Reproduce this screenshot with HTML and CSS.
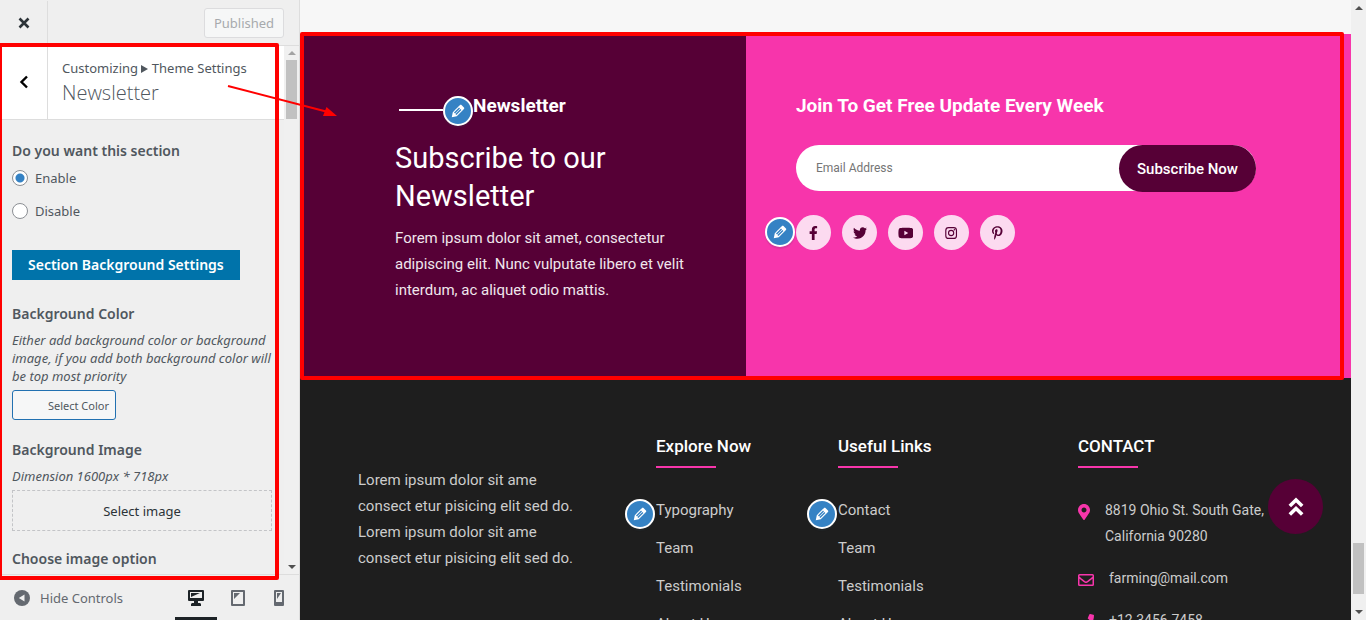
FILE: index.html
```html
<!DOCTYPE html>
<html lang="en">
<head>
<meta charset="utf-8">
<title>Customize: Newsletter</title>
<link rel="stylesheet" href="styles.css">
</head>
<body>
<svg class="defs" aria-hidden="true">
  <symbol id="pencil" viewBox="0 0 20 20"><path d="M13.89 3.39l2.71 2.72c.46.46.42 1.24.03 1.64l-8.01 8.02-5.56 1.16 1.16-5.58s7.6-7.63 7.99-8.03c.39-.39 1.22-.39 1.68.07zm-2.73 2.79l-5.59 5.61 1.11 1.11 5.54-5.65zm-2.97 8.23l5.58-5.6-1.07-1.08-5.59 5.6z"/></symbol>
</svg>
<div class="app">
  <aside class="sidebar">
    <header class="topbar">
      <button class="close" aria-label="Close"><svg width="12" height="12" viewBox="0 0 12 12"><path d="M1.500 1.500l9 9M10.500 1.500l-9 9" stroke="currentColor" stroke-width="2.600"/></svg></button>
      <button class="published" disabled>Published</button>
    </header>
    <div class="panel">
      <div class="controls">
        <div class="heading">
          <button class="back" aria-label="Back"><svg width="10" height="14" viewBox="0 0 10 14"><path d="M8 1.500L2.500 7l5.500 5.500" fill="none" stroke="currentColor" stroke-width="2.400"/></svg></button>
          <div class="crumbs"><span>Customizing <i class="tri"></i> Theme Settings</span><h1>Newsletter</h1></div>
        </div>
        <div class="fields">
          <fieldset class="choice">
            <legend>Do you want this section</legend>
            <label><input type="radio" name="show" checked>Enable</label>
            <label><input type="radio" name="show">Disable</label>
          </fieldset>
          <h2 class="banner">Section Background Settings</h2>
          <h3>Background Color</h3>
          <p class="note">Either add background color or background<br>image, if you add both background color will<br>be top most priority</p>
          <button class="color">Select Color</button>
          <h3>Background Image</h3>
          <p class="note">Dimension 1600px * 718px</p>
          <button class="drop">Select image</button>
          <h3>Choose image option</h3>
        </div>
      </div>
      <div class="scroll scroll-side"><i class="up dim"></i><b class="thumb"></b><i class="down"></i></div>
      <div class="frame"></div>
    </div>
    <footer class="bottombar">
      <button class="hide"><svg width="16" height="16" viewBox="0 0 16 16"><circle cx="8" cy="8" r="8" fill="currentColor"/><path d="M10.500 4.500v7L4.800 8z" fill="#eee"/></svg>Hide Controls</button>
      <div class="devices">
        <button class="on" aria-label="Desktop"><svg width="16" height="16" viewBox="0 0 16 16"><path fill="currentColor" fill-rule="evenodd" d="M1 0h14a1 1 0 0 1 1 1v9a1 1 0 0 1-1 1h-5v2h2a2 2 0 0 1 1 1v2H3v-2l1-1h2v-2H1a1 1 0 0 1-1-1V1a1 1 0 0 1 1-1zm1 2v6h12V2zm1 1h9L3 7z"/></svg></button>
        <button aria-label="Tablet"><svg width="14" height="16" viewBox="0 0 14 16"><path fill="currentColor" fill-rule="evenodd" d="M1 0h12a1 1 0 0 1 1 1v14a1 1 0 0 1-1 1H1a1 1 0 0 1-1-1V1a1 1 0 0 1 1-1zm1 2v12h10V2zm1 1h6L3 9z"/></svg></button>
        <button aria-label="Mobile"><svg width="10" height="16" viewBox="0 0 10 16"><path fill="currentColor" fill-rule="evenodd" d="M1 0h8a1 1 0 0 1 1 1v14a1 1 0 0 1-1 1H1a1 1 0 0 1-1-1V1a1 1 0 0 1 1-1zm1 2v10h6V2zm1 1h4L3 9z"/></svg></button>
      </div>
    </footer>
  </aside>
  <main class="preview">
    <section class="newsletter">
      <div class="intro">
        <h2 class="eyebrow"><span class="rule"></span><button class="edit" aria-label="Edit title"><svg><use href="#pencil"/></svg></button><span class="word">Newsletter</span></h2>
        <p class="lead">Subscribe to our<br>Newsletter</p>
        <p class="copy">Forem ipsum dolor sit amet, consectetur<br>adipiscing elit. Nunc vulputate libero et velit<br>interdum, ac aliquet odio mattis.</p>
      </div>
      <div class="join">
        <h2>Join To Get Free Update Every Week</h2>
        <form class="signup"><input type="email" placeholder="Email Address" aria-label="Email Address"><button type="button">Subscribe Now</button></form>
        <div class="social">
          <button class="edit edit-over" aria-label="Edit social links"><svg><use href="#pencil"/></svg></button>
          <a href="#" aria-label="Facebook"><svg viewBox="0 0 320 512"><path d="M279.140 288l14.220-92.660h-88.910v-60.130c0-25.350 12.420-50.060 52.240-50.060h40.420V6.260S260.430 0 225.360 0c-73.220 0-121.080 44.380-121.080 124.720v70.620H22.890V288h81.390v224h100.170V288z"/></svg></a>
          <a href="#" aria-label="Twitter"><svg viewBox="0 0 512 512"><path d="M459.370 151.716c.325 4.548.325 9.097.325 13.645 0 138.720-105.583 298.558-298.558 298.558-59.452 0-114.680-17.219-161.137-47.106 8.447.974 16.568 1.299 25.340 1.299 49.055 0 94.213-16.568 130.274-44.832-46.132-.975-84.792-31.188-98.112-72.772 6.498.974 12.995 1.624 19.818 1.624 9.421 0 18.843-1.300 27.614-3.573-48.081-9.747-84.143-51.980-84.143-102.985v-1.299c13.969 7.797 30.214 12.670 47.431 13.319-28.264-18.843-46.781-51.005-46.781-87.391 0-19.492 5.197-37.360 14.294-52.954 51.655 63.675 129.300 105.258 216.365 109.807-1.624-7.797-2.599-15.918-2.599-24.040 0-57.828 46.782-104.934 104.934-104.934 30.213 0 57.502 12.670 76.670 33.137 23.715-4.548 46.456-13.320 66.599-25.340-7.798 24.366-24.366 44.833-46.132 57.827 21.117-2.273 41.584-8.122 60.426-16.243-14.292 20.791-32.161 39.308-52.628 54.253z"/></svg></a>
          <a href="#" aria-label="YouTube"><svg viewBox="0 0 576 512"><path d="M549.655 124.083c-6.281-23.650-24.787-42.276-48.284-48.597C458.781 64 288 64 288 64S117.220 64 74.629 75.486c-23.497 6.322-42.003 24.947-48.284 48.597-11.412 42.867-11.412 132.305-11.412 132.305s0 89.438 11.412 132.305c6.281 23.650 24.787 41.500 48.284 47.821C117.220 448 288 448 288 448s170.780 0 213.371-11.486c23.497-6.321 42.003-24.171 48.284-47.821 11.412-42.867 11.412-132.305 11.412-132.305s0-89.438-11.412-132.305zM232.145 337.591V175.185l142.739 81.205z"/></svg></a>
          <a href="#" aria-label="Instagram"><svg viewBox="0 0 448 512"><path fill-rule="evenodd" d="M132 36h184a124 124 0 0 1 124 124v192a124 124 0 0 1-124 124H132A124 124 0 0 1 8 352V160A124 124 0 0 1 132 36zm0 42a82 82 0 0 0-82 82v192a82 82 0 0 0 82 82h184a82 82 0 0 0 82-82V160a82 82 0 0 0-82-82zm92 63a115 115 0 1 1 0 230 115 115 0 0 1 0-230zm0 40a75 75 0 1 0 0 150 75 75 0 0 0 0-150zM344 110a27 27 0 1 1 0 54 27 27 0 0 1 0-54z"/></svg></a>
          <a href="#" aria-label="Pinterest"><svg viewBox="0 0 384 512"><path d="M204 6.500C101.400 6.500 0 74.900 0 185.600 0 256 39.600 296 63.600 296c9.900 0 15.600-27.600 15.600-35.400 0-9.300-23.700-29.100-23.700-67.800 0-80.400 61.200-137.400 140.400-137.400 68.100 0 118.500 38.700 118.500 109.800 0 53.100-21.300 152.700-90.300 152.700-24.900 0-46.200-18-46.200-43.800 0-37.800 26.400-74.400 26.400-113.400 0-66.200-93.900-54.200-93.900 25.800 0 16.800 2.100 35.400 9.600 50.700-13.800 59.400-42 147.900-42 209.100 0 18.900 2.700 37.500 4.500 56.400 3.400 3.800 1.700 3.400 6.900 1.500 50.400-69 48.600-82.500 71.400-172.800 12.300 23.400 44.100 36 69.300 36 106.200 0 153.900-103.500 153.900-196.800C384 71.300 298.200 6.500 204 6.500z"/></svg></a>
        </div>
      </div>
      <div class="frame frame-main"></div>
    </section>
    <footer class="site-footer">
      <p class="about">Lorem ipsum dolor sit ame<br>consect etur pisicing elit sed do.<br>Lorem ipsum dolor sit ame<br>consect etur pisicing elit sed do.</p>
      <nav>
        <h3>Explore Now</h3>
        <ul><li><button class="edit edit-over" aria-label="Edit menu"><svg><use href="#pencil"/></svg></button><a href="#">Typography</a></li><li><a href="#">Team</a></li><li><a href="#">Testimonials</a></li><li><a href="#">About Us</a></li></ul>
      </nav>
      <nav>
        <h3>Useful Links</h3>
        <ul><li><button class="edit edit-over" aria-label="Edit menu"><svg><use href="#pencil"/></svg></button><a href="#">Contact</a></li><li><a href="#">Team</a></li><li><a href="#">Testimonials</a></li><li><a href="#">About Us</a></li></ul>
      </nav>
      <address>
        <h3>CONTACT</h3>
        <p><svg width="12" height="16" viewBox="0 0 384 512"><path d="M172.268 501.670C26.970 291.031 0 269.413 0 192 0 85.961 85.961 0 192 0s192 85.961 192 192c0 77.413-26.970 99.031-172.268 309.670-9.535 13.774-29.930 13.773-39.464 0zM192 272c44.183 0 80-35.817 80-80s-35.817-80-80-80-80 35.817-80 80 35.817 80 80 80z"/></svg><span>8819 Ohio St. South Gate,<br>California 90280</span></p>
        <p><svg width="16" height="16" viewBox="0 0 16 16"><path fill-rule="evenodd" d="M1.500 2h13A1.500 1.500 0 0 1 16 3.500v9a1.500 1.500 0 0 1-1.500 1.500h-13A1.500 1.500 0 0 1 0 12.500v-9A1.500 1.500 0 0 1 1.500 2zm0 1.500v1.300C3 6 4 6.800 6.200 8.500c1.500 1.200 2.100 1.200 3.600 0C12 6.800 13 6 14.500 4.800V3.500zm0 3.200v5.800h13V6.700l-3.800 3c-2.300 1.800-3.100 1.800-5.400 0z"/></svg><span>farming@mail.com</span></p>
        <p><svg width="16" height="16" viewBox="0 0 512 512"><path d="M493.400 24.600l-104-24c-11.300-2.600-22.900 3.300-27.500 13.900l-48 112c-4.200 9.800-1.400 21.300 6.900 28l60.600 49.600c-36 76.700-98.900 140.500-177.200 177.200l-49.600-60.600c-6.800-8.300-18.200-11.100-28-6.900l-112 48C3.900 366.500-2 378.100.600 389.400l24 104C27.100 504.200 36.700 512 48 512c256.100 0 464-207.500 464-464 0-11.200-7.700-20.900-18.600-23.400z"/></svg><span>+12 3456-7458</span></p>
      </address>
    </footer>
    <a class="to-top" href="#" aria-label="Back to top"><svg width="16" height="20" viewBox="0 0 16 20"><path d="M1.800 9L8 3l6.200 6M1.800 17.500L8 11.500l6.200 6" fill="none" stroke="#fff" stroke-width="3.600"/></svg></a>
  </main>
  <div class="scroll scroll-page"><i class="up"></i><b class="thumb"></b><i class="down"></i></div>
  <svg class="arrow" width="112" height="36" viewBox="0 0 112 36" aria-hidden="true"><path d="M1 2l100 26" stroke="#f00" stroke-width="2"/><path d="M110 32l-14 0 3.500-9z" fill="#f00"/></svg>
</div>
</body>
</html>
```

FILE: styles.css
```css
* { box-sizing: border-box; }
body { margin: 0; font-family: "Noto Sans", sans-serif; font-size: 13px; color: #50575e; }
h1, h2, h3, p, ul, fieldset { margin: 0; padding: 0; border: 0; }
ul { list-style: none; }
button { font: inherit; color: inherit; padding: 0; border: 0; background: none; cursor: pointer; }
a { color: inherit; text-decoration: none; }
.defs { position: absolute; width: 0; height: 0; }
.app { position: relative; display: grid; grid-template-columns: 300px 1fr 15px; height: 100vh; overflow: hidden; }

.sidebar { display: flex; flex-direction: column; min-height: 0; background: #efefef; border-right: 1px solid #ddd; }
.topbar { display: flex; justify-content: space-between; align-items: center; height: 46px; flex: none; padding: 1px 15px 0 0; border-bottom: 1px solid #ddd; }
.close, .back { display: flex; align-items: center; justify-content: center; align-self: stretch; width: 48px; border-right: 1px solid #ddd; color: #2c3338; }
.published { width: 80px; height: 30px; border: 1px solid #dcdcde; border-radius: 3px; background: #f6f7f7; color: #a7aaad; }
.panel { position: relative; display: flex; flex: 1; min-height: 0; }
.controls { flex: 1; min-width: 0; overflow: hidden; }
.heading { display: flex; height: 74px; background: #fff; border-bottom: 1px solid #ddd; }
.back { color: #000; padding-bottom: 2px; }
.crumbs { padding: 12px 0 0 14px; line-height: 20px; white-space: nowrap; }
.tri { display: inline-block; border: 4px solid transparent; border-left: 7px solid #50575e; border-right: 0; }
h1 { font-family: "Open Sans", sans-serif; font-size: 20px; font-weight: 300; line-height: 30px; }
.fields { display: flex; flex-direction: column; align-items: flex-start; padding: 21px 12px 0; white-space: nowrap; }
legend, h3 { font-size: 14px; font-weight: 600; line-height: 20px; padding: 0; }
.choice label { display: flex; align-items: center; gap: 7px; height: 33px; }
.choice { margin-bottom: 23px; }
.choice input { appearance: none; width: 16px; height: 16px; margin: 0; border: 1px solid #8c8f94; border-radius: 50%; background: #fff; }
.choice input:checked { background: radial-gradient(circle, #3582c4 0 4px, #fff 5px); }
.banner { background: #0073aa; color: #fff; font-size: 14px; font-weight: 600; line-height: 30px; padding: 0 16px; margin-bottom: 24px; }
.note { font-size: 13px; font-style: italic; line-height: 18px; margin: 7px 0 5px; }
.color { width: 104px; height: 30px; border: 1px solid #2271b1; border-radius: 3px; background: #f6f7f7; font-size: 11px; text-align: right; padding-right: 6px; margin-bottom: 20px; }
.drop { width: 260px; height: 41px; border: 1px dashed #c3c4c7; color: #2c3338; margin-bottom: 18px; }
.bottombar { display: flex; justify-content: space-between; height: 46px; flex: none; border-top: 1px solid #ddd; padding: 0 0 0 14px; }
.hide { display: flex; align-items: center; gap: 10px; color: #646970; }
.devices { display: flex; }
.devices button { width: 41px; display: flex; justify-content: center; align-items: center; color: #646970; border-bottom: 3px solid transparent; padding-top: 4px; }
.devices .on { color: #1d2327; border-color: #1d2327; width: 42px; }

.scroll { display: flex; flex-direction: column; align-items: center; background: #f0f0f0; }
.scroll-side { width: 15px; padding: 5px 0; }
.scroll-page { padding: 6px 0; }
.up, .down { border: 4px solid transparent; flex: none; }
.up { border-top: 0; border-bottom-color: #505050; }
.dim { border-bottom-color: #a3a3a3; }
.down { border-bottom: 0; border-top-color: #505050; }
.thumb { width: 11px; background: #c1c1c1; flex: none; }
.scroll-side .thumb { height: 59px; margin: 5px 0 auto; }
.scroll-page .thumb { height: 51px; margin: auto 0 16px; }

.preview { position: relative; min-width: 0; padding-top: 34px; background: #f7f7f7; font-family: Roboto, sans-serif; font-size: 15px; line-height: 26px; white-space: nowrap; display: flex; flex-direction: column; overflow: hidden; }
.newsletter { position: relative; display: grid; grid-template-columns: 446fr 605fr; height: 344px; flex: none; color: #fff; }
.intro { background: #560036; padding: 56px 0 0 95px; }
.join { background: #f735ab; padding: 56px 95px 0 50px; }
.newsletter h2 { font-size: 19px; font-weight: 700; line-height: 32px; }
.eyebrow { display: flex; align-items: flex-end; height: 36px; }
.word { align-self: flex-start; }
.rule { width: 44px; height: 2px; margin: 0 0 15px 4px; background: #fff; }
.edit { display: inline-flex; align-items: center; justify-content: center; width: 30px; height: 30px; border: 2px solid #fff; border-radius: 50%; background: #3582c4; box-shadow: 0 2px 1px rgba(46, 68, 83, .15); }
.edit svg { width: 18px; height: 18px; fill: #fff; }
.edit-over { position: absolute; right: 100%; top: 2px; margin-right: 1px; }
.lead { font-size: 29px; line-height: 38px; margin: 13px 0 10px; }
.copy { color: #f0e6ec; }
.signup { display: flex; height: 46px; margin: 23px 0 24px; border-radius: 23px; background: #fff; }
.signup input { flex: 1; min-width: 0; border: 0; background: none; padding: 0 20px; font: 12px Roboto, sans-serif; outline: 0; }
.signup input::placeholder { color: #757575; }
.signup button { width: 137px; height: 47px; border-radius: 24px; background: #560036; color: #fff; font-weight: 500; }
.social { position: relative; display: flex; gap: 11px; width: max-content; }
.social a { display: flex; align-items: center; justify-content: center; width: 35px; height: 35px; border-radius: 50%; background: #fcdaf0; }
.social a svg { height: 14px; fill: #560036; }
.site-footer { display: grid; grid-template-columns: 298fr 182fr 240fr 273fr; flex: 1; min-height: 0; padding: 56px 0 0 58px; background: #1e1e1e; color: #ccc; }
.about { padding-top: 33px; }
.site-footer h3 { color: #fff; font-size: 17px; font-weight: 500; line-height: 24px; margin-bottom: 29px; }
.site-footer h3::after { content: ""; display: block; width: 60px; height: 2px; margin-top: 8px; background: #f735ab; }
.site-footer li { position: relative; height: 38px; }
address { font-style: normal; font-size: 14px; }
address p { display: flex; align-items: flex-start; gap: 15px; margin-bottom: 16px; }
address svg { fill: #f735ab; margin-top: 7px; flex: none; }
.to-top { position: absolute; right: 28px; bottom: 86px; width: 55px; height: 55px; border-radius: 50%; background: #560036; display: flex; align-items: center; justify-content: center; }

.frame { position: absolute; inset: -3px 20px -6px -2px; border: 4px solid #f00; border-radius: 2px; pointer-events: none; z-index: 2; }
.frame-main { inset: -2px 7px -2px 0; }
.arrow { position: absolute; left: 227px; top: 84px; z-index: 3; pointer-events: none; }
```
